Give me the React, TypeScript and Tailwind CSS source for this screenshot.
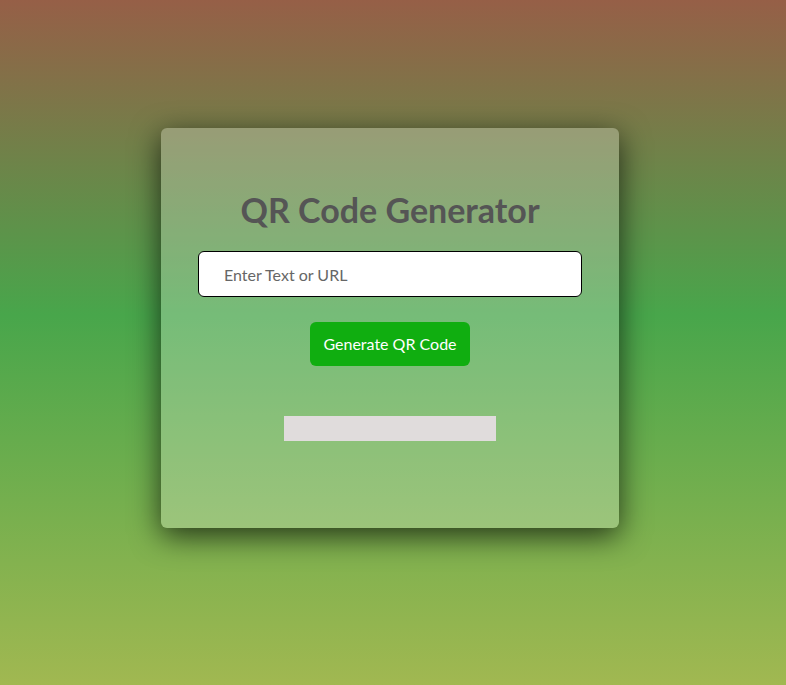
export default function App() {
  return (
    <div className="min-h-[685px] w-full bg-[linear-gradient(to_bottom,#965f47_0%,#48a64b_46%,#a1b851_100%)] flex justify-center pt-[128px] pr-[6px] font-['Lato',sans-serif]">
      <div className="w-[458px] h-[400px] rounded-md bg-white/25 shadow-[0_8px_30px_rgba(0,0,0,0.7)] flex flex-col items-center pt-[62px]">
        <h1 className="text-[34px] leading-[40px] font-bold text-[#555555]">QR Code Generator</h1>
        <input
          type="text"
          placeholder="Enter Text or URL"
          className="mt-[21px] w-[384px] h-[46px] rounded-md border border-black bg-white pl-[25px] text-[16px] text-[#333] placeholder:text-[#666] outline-none"
        />
        <button className="mt-[25px] w-[160px] h-[44px] rounded-md bg-[#10ae10] text-white text-[16px]">
          Generate QR Code
        </button>
        <div className="mt-[50px] w-[212px] h-[25px] bg-[#e0dcdc]" />
      </div>
    </div>
  );
}
